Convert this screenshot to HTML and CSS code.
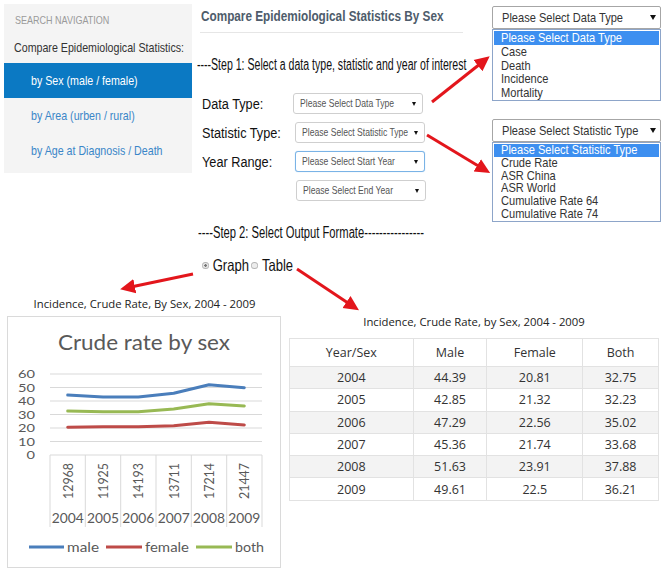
FILE: index.html
```html
<!DOCTYPE html>
<html lang="en">
<head>
<meta charset="utf-8">
<title>Compare Epidemiological Statistics By Sex</title>
<link rel="stylesheet" href="styles.css">
</head>
<body>
<div class="page">
  <div class="top">
    <nav class="nav">
      <div class="nav-head"><span class="nx">SEARCH NAVIGATION</span></div>
      <div class="nav-title"><span class="nx">Compare Epidemiological Statistics:</span></div>
      <ul class="nav-list">
        <li class="active"><span class="nx">by Sex (male / female)</span></li>
        <li><span class="nx">by Area (urben / rural)</span></li>
        <li><span class="nx">by Age at Diagnosis / Death</span></li>
      </ul>
    </nav>

    <section class="form">
      <h1 class="form-title"><span class="nx">Compare Epidemiological Statistics By Sex</span></h1>
      <p class="step step1"><span class="squish">----Step 1: Select a data type, statistic and year of interest</span></p>
      <div class="field first">
        <span class="label"><span class="nx">Data Type:</span></span>
        <div class="sel sel-a"><span class="clip"><span class="nx">Please Select Data Type</span></span><i class="caret"></i></div>
      </div>
      <div class="field">
        <span class="label"><span class="nx">Statistic Type:</span></span>
        <div class="sel"><span class="clip"><span class="nx">Please Select Statistic Type</span></span><i class="caret"></i></div>
      </div>
      <div class="field">
        <span class="label"><span class="nx">Year Range:</span></span>
        <div class="sel focus"><span class="clip"><span class="nx">Please Select Start Year</span></span><i class="caret"></i></div>
      </div>
      <div class="field">
        <span class="label"></span>
        <div class="sel sel-d"><span class="clip"><span class="nx">Please Select End Year</span></span><i class="caret"></i></div>
      </div>
      <p class="step step2"><span class="squish">----Step 2: Select Output Formate----------------</span></p>
      <div class="radios">
        <div class="radio-row">
          <span class="radio on"></span><span class="rlabel">Graph</span>
          <span class="radio"></span><span class="rlabel">Table</span>
        </div>
      </div>
    </section>

    <aside class="drops">
      <div class="dd">
        <div class="dd-box"><span class="clip"><span class="nx">Please Select Data Type</span></span><i class="dd-caret"></i></div>
        <ul class="dd-list">
          <li class="hl"><span class="nx">Please Select Data Type</span></li>
          <li><span class="nx">Case</span></li>
          <li><span class="nx">Death</span></li>
          <li><span class="nx">Incidence</span></li>
          <li><span class="nx">Mortality</span></li>
        </ul>
      </div>
      <div class="dd dd2">
        <div class="dd-box"><span class="clip"><span class="nx">Please Select Statistic Type</span></span><i class="dd-caret"></i></div>
        <ul class="dd-list">
          <li class="hl"><span class="nx">Please Select Statistic Type</span></li>
          <li><span class="nx">Crude Rate</span></li>
          <li><span class="nx">ASR China</span></li>
          <li><span class="nx">ASR World</span></li>
          <li><span class="nx">Cumulative Rate 64</span></li>
          <li><span class="nx">Cumulative Rate 74</span></li>
        </ul>
      </div>
    </aside>
  </div>

  <div class="bottom">
    <div class="chart-panel">
      <div class="cap">Incidence, Crude Rate, By Sex, 2004 - 2009</div>
      <div class="chart-box">
        <svg class="chart" width="272" height="250" viewBox="8 317 272 250">
          <text x="144" y="350" text-anchor="middle" class="c-title" textLength="172" lengthAdjust="spacingAndGlyphs">Crude rate by sex</text>
          <g class="grid">
            <line x1="50" y1="374" x2="262" y2="374"/>
            <line x1="50" y1="387.5" x2="262" y2="387.5"/>
            <line x1="50" y1="401" x2="262" y2="401"/>
            <line x1="50" y1="414.5" x2="262" y2="414.5"/>
            <line x1="50" y1="428" x2="262" y2="428"/>
            <line x1="50" y1="441.5" x2="262" y2="441.5"/>
            <line x1="50" y1="455" x2="262" y2="455"/>
            <line x1="50" y1="455" x2="50" y2="527"/>
            <line x1="85.3" y1="455" x2="85.3" y2="527"/>
            <line x1="120.7" y1="455" x2="120.7" y2="527"/>
            <line x1="156" y1="455" x2="156" y2="527"/>
            <line x1="191.3" y1="455" x2="191.3" y2="527"/>
            <line x1="226.7" y1="455" x2="226.7" y2="527"/>
            <line x1="262" y1="455" x2="262" y2="527"/>
          </g>
          <g class="c-ylab" text-anchor="end">
            <text x="35" y="378" textLength="17" lengthAdjust="spacingAndGlyphs">60</text>
            <text x="35" y="391.5" textLength="17" lengthAdjust="spacingAndGlyphs">50</text>
            <text x="35" y="405" textLength="17" lengthAdjust="spacingAndGlyphs">40</text>
            <text x="35" y="418.5" textLength="17" lengthAdjust="spacingAndGlyphs">30</text>
            <text x="35" y="432" textLength="17" lengthAdjust="spacingAndGlyphs">20</text>
            <text x="35" y="445.5" textLength="17" lengthAdjust="spacingAndGlyphs">10</text>
            <text x="35" y="459" textLength="8.5" lengthAdjust="spacingAndGlyphs">0</text>
          </g>
          <polyline class="s-male" points="67.7,395 103,397 138.3,397 173.7,393.3 209,384.7 244.3,387.7"/>
          <polyline class="s-both" points="67.7,411 103,411.7 138.3,411.7 173.7,409 209,403.7 244.3,406"/>
          <polyline class="s-female" points="67.7,427.3 103,426.7 138.3,426.7 173.7,425.7 209,422.3 244.3,425"/>
          <g class="c-axis" text-anchor="middle">
            <text transform="translate(72.7,481) rotate(-90)" textLength="36" lengthAdjust="spacingAndGlyphs">12968</text>
            <text transform="translate(108,481) rotate(-90)" textLength="36" lengthAdjust="spacingAndGlyphs">11925</text>
            <text transform="translate(143.3,481) rotate(-90)" textLength="36" lengthAdjust="spacingAndGlyphs">14193</text>
            <text transform="translate(178.7,481) rotate(-90)" textLength="36" lengthAdjust="spacingAndGlyphs">13711</text>
            <text transform="translate(214,481) rotate(-90)" textLength="36" lengthAdjust="spacingAndGlyphs">17214</text>
            <text transform="translate(249.3,481) rotate(-90)" textLength="36" lengthAdjust="spacingAndGlyphs">21447</text>
            <text x="67.7" y="523" textLength="32" lengthAdjust="spacingAndGlyphs">2004</text>
            <text x="103" y="523" textLength="32" lengthAdjust="spacingAndGlyphs">2005</text>
            <text x="138.3" y="523" textLength="32" lengthAdjust="spacingAndGlyphs">2006</text>
            <text x="173.7" y="523" textLength="32" lengthAdjust="spacingAndGlyphs">2007</text>
            <text x="209" y="523" textLength="32" lengthAdjust="spacingAndGlyphs">2008</text>
            <text x="244.3" y="523" textLength="32" lengthAdjust="spacingAndGlyphs">2009</text>
          </g>
          <g class="legend">
            <line class="s-male" x1="29" y1="547" x2="64" y2="547"/>
            <text x="67" y="552" textLength="32" lengthAdjust="spacingAndGlyphs">male</text>
            <line class="s-female" x1="106" y1="547" x2="142" y2="547"/>
            <text x="145" y="552" textLength="44" lengthAdjust="spacingAndGlyphs">female</text>
            <line class="s-both" x1="196" y1="547" x2="232" y2="547"/>
            <text x="235" y="552" textLength="29" lengthAdjust="spacingAndGlyphs">both</text>
          </g>
        </svg>
      </div>
    </div>

    <div class="table-panel">
      <div class="cap">Incidence, Crude Rate, by Sex, 2004 - 2009</div>
      <table class="data">
        <colgroup><col class="c1"><col class="c2"><col class="c3"><col class="c4"></colgroup>
        <thead>
          <tr><th>Year/Sex</th><th>Male</th><th>Female</th><th>Both</th></tr>
        </thead>
        <tbody>
          <tr><td>2004</td><td>44.39</td><td>20.81</td><td>32.75</td></tr>
          <tr><td>2005</td><td>42.85</td><td>21.32</td><td>32.23</td></tr>
          <tr><td>2006</td><td>47.29</td><td>22.56</td><td>35.02</td></tr>
          <tr><td>2007</td><td>45.36</td><td>21.74</td><td>33.68</td></tr>
          <tr><td>2008</td><td>51.63</td><td>23.91</td><td>37.88</td></tr>
          <tr><td>2009</td><td>49.61</td><td>22.5</td><td>36.21</td></tr>
        </tbody>
      </table>
    </div>
  </div>

  <svg class="arrows" width="666" height="578" viewBox="0 0 666 578">
    <defs>
      <marker id="ah" markerWidth="6" markerHeight="6" refX="3" refY="3" orient="auto" markerUnits="strokeWidth">
        <path d="M0,0.6 L5,3 L0,5.4 Z" fill="#e3161c"/>
      </marker>
    </defs>
    <line x1="432" y1="102" x2="485" y2="60" marker-end="url(#ah)"/>
    <line x1="427" y1="135" x2="485" y2="170" marker-end="url(#ah)"/>
    <line x1="193" y1="274" x2="126" y2="288" marker-end="url(#ah)"/>
    <line x1="297" y1="269" x2="354" y2="307" marker-end="url(#ah)"/>
  </svg>
</div>
</body>
</html>
```

FILE: styles.css
```css
* { box-sizing: border-box; margin: 0; padding: 0; }

body {
  width: 666px;
  height: 578px;
  overflow: hidden;
  background: #fff;
  color: #333;
  font-family: "Liberation Sans", Arial, sans-serif;
}

.page { position: relative; width: 666px; height: 578px; }

/* narrow (Arial Narrow–like) rendering of Liberation Sans */
.nx {
  display: inline-block;
  white-space: nowrap;
  transform: scaleX(0.82);
  transform-origin: 0 50%;
}

/* ---------- top area ---------- */
.top { display: flex; height: 292px; }

.nav {
  flex: none;
  margin: 4px 0 0 4px;
  width: 188px;
  height: 169px;
  background: #f4f4f4;
}
.nav-head {
  padding: 10px 0 0 11px;
  font-size: 11px;
  line-height: 12px;
  color: #9a9a9a;
}
.nav-title {
  margin-top: 14px;
  padding-left: 10px;
  font-size: 13px;
  line-height: 16px;
  color: #333;
}
.nav-list { list-style: none; margin-top: 7px; }
.nav-list li {
  height: 35px;
  line-height: 35px;
  padding-left: 27px;
  font-size: 13px;
  color: #3a86c8;
}
.nav-list li.active { background: #0b79c3; color: #fff; }

.form { flex: none; width: 290px; margin-left: 5px; }
.form-title {
  margin-left: 3px;
  width: 263px;
  padding: 8px 0 8px 1px;
  border-bottom: 1px solid #e6e6e6;
  font-size: 14px;
  line-height: 16px;
  font-weight: bold;
  color: #4e5c6b;
  white-space: nowrap;
}
.form-title .nx { transform: scaleX(0.84); }
.step {
  height: 20px;
  line-height: 20px;
  white-space: nowrap;
  font-size: 16px;
  color: #111;
}
.squish {
  display: inline-block;
  transform-origin: 0 50%;
}
.step1 { margin-top: 22px; }
.step1 .squish { transform: scaleX(0.66); }
.step2 { margin-top: 18px; padding-left: 1px; }
.step2 .squish { transform: scaleX(0.70); }

.field {
  display: flex;
  align-items: center;
  height: 29px;
  padding-left: 5px;
}
.field.first { margin-top: 14px; }
.label {
  flex: none;
  width: 93px;
  font-size: 15.5px;
  color: #111;
  white-space: nowrap;
}
.sel {
  position: relative;
  flex: none;
  width: 130px;
  height: 21px;
  padding-left: 6px;
  border: 1px solid #cfcfcf;
  border-radius: 3px;
  background: #fff;
  font-size: 10.5px;
  line-height: 19px;
  color: #555;
}
.sel-a { margin-left: -2px; }
.sel-d { margin-left: 1px; }
.clip { display: block; overflow: hidden; white-space: nowrap; }
.sel .clip { width: 108px; }
.sel.focus { border-color: #7ab3e6; box-shadow: 0 0 1px #9cc8ef; }
.caret {
  position: absolute;
  right: 6px;
  top: 8px;
  border-left: 2px solid transparent;
  border-right: 2px solid transparent;
  border-top: 4px solid #111;
}

.radios {
  margin-top: 12px;
  padding-left: 5px;
  height: 20px;
}
.radio-row {
  display: inline-flex;
  align-items: center;
  height: 20px;
  font-size: 16.5px;
  color: #111;
  white-space: nowrap;
  transform: scaleX(0.79);
  transform-origin: 0 50%;
}
.radio {
  width: 8.5px;
  height: 7px;
  border-radius: 50%;
  border: 1px solid #b5b5b5;
  background: #ececec;
  margin-right: 5px;
}
.radio.on { background: radial-gradient(ellipse, #777 0 1.5px, #e6e6e6 2px); }
.rlabel { margin-right: 3px; }

/* ---------- open dropdowns ---------- */
.drops { flex: none; margin-left: 5px; width: 169px; }
.dd { margin-top: 6px; }
.dd2 { margin-top: 18px; }
.dd-box {
  position: relative;
  height: 23px;
  padding-left: 9px;
  border: 1px solid #a6a6a6;
  border-radius: 2px;
  font-size: 13.5px;
  line-height: 21px;
  color: #333;
}
.dd-box .clip { width: 139px; }
.dd-caret {
  position: absolute;
  right: 4px;
  top: 8px;
  border-left: 3px solid transparent;
  border-right: 3px solid transparent;
  border-top: 5px solid #111;
}
.dd-list {
  list-style: none;
  border: 1px solid #8da5c9;
  padding: 1px 1px 0;
  font-size: 13.5px;
  color: #333;
}
.dd-list li { height: 13.8px; line-height: 13.8px; padding-left: 7px; white-space: nowrap; }
.dd2 .dd-list li { height: 12.8px; line-height: 12.8px; }
.dd-list li.hl { background: #3d8ff0; color: #fff; }

/* ---------- bottom area ---------- */
.bottom { display: flex; }
.cap {
  height: 16px;
  line-height: 16px;
  text-align: center;
  font-family: "Open Sans", "Noto Sans", sans-serif;
  font-size: 11.3px;
  color: #222;
  white-space: nowrap;
}
.chart-panel { flex: none; margin-left: 7px; width: 275px; }
.chart-panel .cap { margin-top: 4px; }
.chart-box {
  margin-top: 4px;
  width: 274px;
  height: 252px;
  border: 1px solid #dadada;
}
.chart { display: block; }
.chart text { font-family: Lato, "Open Sans", sans-serif; fill: #595959; }
.c-title { font-size: 21px; }
.c-ylab { font-size: 11px; }
.c-axis { font-size: 14px; }
.legend text { font-size: 14px; }
.grid line { stroke: #d9d9d9; stroke-width: 1; }
.s-male, .s-female, .s-both { fill: none; stroke-width: 3; stroke-linejoin: round; stroke-linecap: round; }
.s-male { stroke: #4a7ebb; }
.s-female { stroke: #be4b48; }
.s-both { stroke: #98b954; }
.legend line { stroke-linecap: butt; }

.table-panel { flex: none; margin-left: 7px; width: 370px; }
.table-panel .cap { margin-top: 22px; }
.data {
  margin-top: 8px;
  width: 370px;
  border-collapse: collapse;
  font-family: "Open Sans", "Noto Sans", sans-serif;
  font-size: 12.5px;
  color: #333;
  text-align: center;
}
.c1 { width: 124px; }
.c2 { width: 74px; }
.c3 { width: 96px; }
.c4 { width: 76px; }
.data th, .data td { border: 1px solid #e2e2e2; padding: 0; font-weight: normal; }
.data th { height: 28px; }
.data td { height: 22.3px; }
.data tbody tr:nth-child(odd) { background: #f3f3f3; }

/* ---------- annotation arrows ---------- */
.arrows { position: absolute; left: 0; top: 0; pointer-events: none; }
.arrows line { stroke: #e3161c; stroke-width: 3; }
```
